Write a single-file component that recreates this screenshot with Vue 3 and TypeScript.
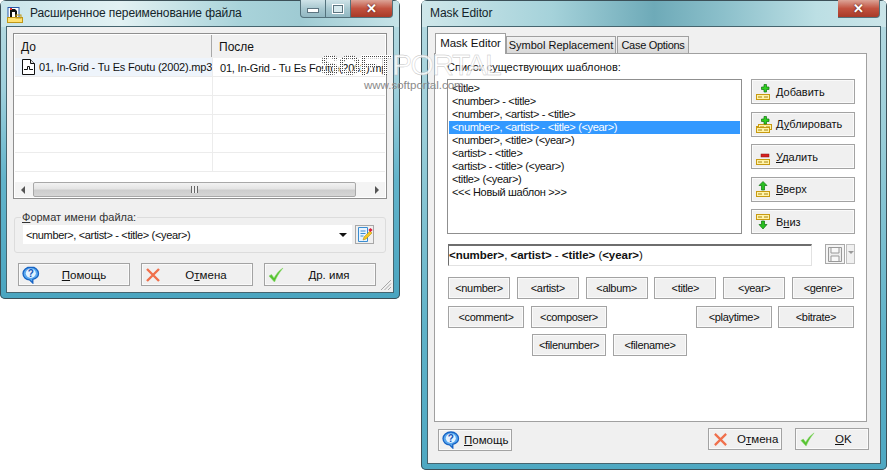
<script setup lang="ts">
const rows = [0, 1, 2, 3, 4, 5]
const templates = [
  '<title>',
  '<number> - <title>',
  '<number>, <artist> - <title>',
  '<number>, <artist> - <title> (<year>)',
  '<number>, <title> (<year>)',
  '<artist> - <title>',
  '<artist> - <title> (<year>)',
  '<title> (<year>)',
  '<<< Новый шаблон >>>',
]
const side = [
  { key: 'add', pre: '', u: 'Д', post: 'обавить' },
  { key: 'dup', pre: 'Д', u: 'у', post: 'блировать' },
  { key: 'del', pre: '', u: 'У', post: 'далить' },
  { key: 'up', pre: '', u: 'В', post: 'верх' },
  { key: 'down', pre: 'В', u: 'н', post: 'из' },
]
const row1 = ['<number>', '<artist>', '<album>', '<title>', '<year>', '<genre>']
</script>

<template>
  <div class="desk">
    <svg class="defs" width="0" height="0">
      <defs>
        <symbol id="i-help" viewBox="0 0 18 18">
          <path d="M9 1C4.500 1 1 4 1 7.600c0 3.400 3 6 6.500 6.200l3.300 3.200v-3.600c3.200-.8 5.700-3 5.700-5.800C16.500 4 13.300 1 9 1z" fill="#5aa8ee" stroke="#1763c4" stroke-width="1.300"/>
          <ellipse cx="8.800" cy="7.300" rx="5" ry="4.600" fill="#e4f2ff"/>
          <text x="8.800" y="11" text-anchor="middle" font-size="10" font-weight="700" font-family="Liberation Sans" fill="#1557b8">?</text>
        </symbol>
        <symbol id="i-x" viewBox="0 0 16 16">
          <path d="M2 2l12 12M14 2L2 14" stroke="#f0704c" stroke-width="2.400" fill="none"/>
        </symbol>
        <symbol id="i-ok" viewBox="0 0 16 16">
          <path d="M1 9l2.500-1.500L6 11c2-3.500 4.500-7 9-10C11 6 8.500 10 6.500 15z" fill="#55c230" stroke="#88d868" stroke-width=".6"/>
        </symbol>
        <symbol id="i-bar" viewBox="0 0 14 6">
          <rect x=".5" y=".5" width="13" height="5" fill="#fff3a8" stroke="#c89a10"/>
          <path d="M2 3h4M8 3h4" stroke="#a88410"/>
        </symbol>
      </defs>
    </svg>

    <!-- left window -->
    <section class="win win-left">
      <div class="glass glass-left"></div>
      <header class="titlebar">
        <svg class="app" width="16" height="16" viewBox="0 0 16 16">
          <rect x="1" y="0.500" width="11" height="11" fill="#fff" stroke="#2858a8"/>
          <path d="M3 2h5l2 2v7H8V5H5v6H3z" fill="#111"/>
          <rect x="3" y="1" width="2" height="2" fill="#e03030"/>
          <rect x="0.500" y="10.500" width="15" height="5" fill="#ffe070" stroke="#c09818"/>
          <rect x="9" y="8" width="5" height="3" fill="none" stroke="#c09818"/>
        </svg>
        <span class="title-text">Расширенное переименование файла</span>
        <div class="caption">
          <span class="cap cap-min"><i></i></span>
          <span class="cap cap-max"><b></b></span>
          <span class="cap cap-close">✕</span>
        </div>
      </header>
      <div class="client client-left">
        <div class="grid">
          <div class="grid-head">
            <span class="col col-a">До</span>
            <span class="col col-b">После</span>
          </div>
          <div class="grid-body">
            <div v-for="r in rows" :key="r" class="grid-row">
              <div class="cell cell-a" :class="{ tint: r === 0 }">
                <template v-if="r === 0">
                  <svg width="15" height="16" viewBox="0 0 15 16">
                    <path d="M1.500.5h8l4 4v11h-12z" fill="#fff" stroke="#111"/>
                    <path d="M9.500.5v4h4" fill="#ddd" stroke="#111"/>
                    <path d="M3 10.500h3.500V7.500h2v3H12" fill="none" stroke="#111"/>
                  </svg>
                  <span>01, In-Grid - Tu Es Foutu (2002).mp3</span>
                </template>
              </div>
              <div class="cell cell-b"><span v-if="r === 0">01, In-Grid - Tu Es Foutu (2002).mp3</span></div>
            </div>
          </div>
          <div class="hscroll">
            <span class="arrow arrow-l"></span>
            <div class="thumb"><span class="grip"></span></div>
            <span class="arrow arrow-r"></span>
          </div>
        </div>

        <fieldset class="group">
          <legend><u>Ф</u>ормат имени файла:</legend>
          <div class="combo-row">
            <div class="combo">
              <span>&lt;number&gt;, &lt;artist&gt; - &lt;title&gt; (&lt;year&gt;)</span>
              <i class="combo-arrow"></i>
            </div>
            <button class="edit-btn">
              <svg width="17" height="17" viewBox="0 0 17 17">
                <path d="M2.500 1.500h9v14h-9z" fill="#e8f4ff" stroke="#3a8cd0"/>
                <path d="M4.500 5h5M4.500 7.500h5M4.500 10h3" stroke="#3a8cd0"/>
                <path d="M7 14l1-3 6-6 2 2-6 6z" fill="#f6c820" stroke="#a88410" stroke-width=".5"/>
                <rect x="13" y="2.500" width="3" height="3" fill="#d8203c" transform="rotate(45 14.500 4)"/>
              </svg>
            </button>
          </div>
        </fieldset>

        <div class="actions">
          <button class="btn wide"><svg class="ic" width="18" height="18"><use href="#i-help"/></svg><span class="lbl"><u>П</u>омощь</span></button>
          <button class="btn wide"><svg class="ic" width="16" height="16"><use href="#i-x"/></svg><span class="lbl">О<u>т</u>мена</span></button>
          <button class="btn wide"><svg class="ic" width="16" height="16"><use href="#i-ok"/></svg><span class="lbl"><u>Д</u>р. имя</span></button>
        </div>
        <svg class="resize" width="12" height="12" viewBox="0 0 12 12">
          <path d="M11 1L1 11M11 4.500L4.500 11M11 8L8 11" stroke="#a8a8a8" fill="none"/>
        </svg>
      </div>
    </section>

    <!-- right window -->
    <section class="win win-right">
      <div class="glass glass-right"></div>
      <header class="titlebar">
        <span class="title-text title-plain">Mask Editor</span>
        <div class="caption">
          <span class="cap cap-close">✕</span>
        </div>
      </header>
      <div class="client client-right">
        <nav class="tabs">
          <span class="tab tab-on">Mask Editor</span>
          <span class="tab tab-sym">Symbol Replacement</span>
          <span class="tab tab-case">Case Options</span>
        </nav>
        <div class="panel">
          <div class="panel-label">Список существующих шаблонов:</div>
          <div class="list-row">
            <ul class="tpl-list">
              <li v-for="(t, i) in templates" :key="i" :class="{ sel: i === 3 }">{{ t }}</li>
            </ul>
            <div class="side">
              <button v-for="s in side" :key="s.key" class="btn side-btn">
                <svg width="16" height="18" viewBox="0 0 16 18" class="side-ic">
                  <template v-if="s.key === 'down'">
                    <use href="#i-bar" x="0" y="1" width="14" height="6"/>
                    <path d="M5.500 8h3v3.500H11l-4 4.500-4-4.500h2.500z" fill="#28c020" stroke="#107010" stroke-width=".7"/>
                  </template>
                  <template v-else>
                    <use href="#i-bar" x="0" y="11" width="14" height="6"/>
                    <use v-if="s.key === 'dup'" href="#i-bar" x="2" y="9" width="14" height="6"/>
                    <use v-if="s.key === 'dup'" href="#i-bar" x="0" y="12" width="14" height="6"/>
                    <path v-if="s.key === 'add' || s.key === 'dup'" d="M8 1.500h2.500v2.500H13v2.500h-2.500V9H8V6.500H5.500V4H8z" fill="#30d020" stroke="#107010" stroke-width=".7"/>
                    <rect v-if="s.key === 'del'" x="5" y="6" width="8" height="3" fill="#d82020" stroke="#801010" stroke-width=".5"/>
                    <path v-if="s.key === 'up'" d="M7 1.500l4 4H8.500V10h-3V5.500H3z" fill="#28c020" stroke="#107010" stroke-width=".7"/>
                  </template>
                </svg>
                <span>{{ s.pre }}<u>{{ s.u }}</u>{{ s.post }}</span>
              </button>
            </div>
          </div>
          <div class="mask-row">
            <div class="mask-input"><b>&lt;number&gt;</b>, <b>&lt;artist&gt;</b> - <b>&lt;title&gt;</b> (<b>&lt;year&gt;</b>)</div>
            <button class="save-btn">
              <svg width="14" height="15" viewBox="0 0 14 15">
                <path d="M.5.5h13v14H.5z" fill="#eee" stroke="#999"/>
                <path d="M3 1v5h8V1M3 14V9h8v5" fill="#f8f8f8" stroke="#999"/>
              </svg>
            </button>
            <button class="save-drop"><i></i></button>
          </div>
          <div class="tags">
            <div class="tag-row spread">
              <button v-for="t in row1" :key="t" class="btn tag">{{ t }}</button>
            </div>
            <div class="tag-row row2">
              <button class="btn tag tag-wide">&lt;comment&gt;</button>
              <button class="btn tag tag-wide">&lt;composer&gt;</button>
              <button class="btn tag tag-wide push">&lt;playtime&gt;</button>
              <button class="btn tag tag-wide">&lt;bitrate&gt;</button>
            </div>
            <div class="tag-row row3">
              <button class="btn tag tag-mid">&lt;filenumber&gt;</button>
              <button class="btn tag tag-mid">&lt;filename&gt;</button>
            </div>
          </div>
        </div>
        <footer class="foot">
          <button class="btn foot-btn foot-help"><svg width="18" height="18"><use href="#i-help"/></svg><span><u>П</u>омощь</span></button>
          <button class="btn foot-btn foot-cancel"><svg width="15" height="15"><use href="#i-x"/></svg><span>О<u>т</u>мена</span></button>
          <button class="btn foot-btn foot-ok"><svg width="15" height="15"><use href="#i-ok"/></svg><span><u>O</u>K</span></button>
        </footer>
      </div>
    </section>

    <!-- watermark over both windows -->
    <div class="wm wm-soft">SOFT</div>
    <div class="wm wm-portal">PORTAL</div>
    <div class="wm wm-url">www.softportal.com</div>
  </div>
</template>

<style>
html, body { margin: 0; background: #fff; }
</style>

<style scoped>
.desk {
  position: relative;
  width: 887px;
  height: 470px;
  overflow: hidden;
  background: #fff;
  font: 11px "Liberation Sans", Arial, sans-serif;
  color: #111;
}
.defs { position: absolute; }
.win {
  position: absolute;
  top: 0;
  box-sizing: border-box;
  padding: 0 7px 7px;
  border-radius: 6px 6px 5px 5px;
  box-shadow: inset 0 0 0 1px #3c5058;
  display: flex;
  flex-direction: column;
  overflow: hidden;
}
.win-left { left: 0; width: 400px; height: 299px; background: linear-gradient(180deg, #bcdde3 0, #9fd0dc 30%, #62b4cb 60%, #4aa5c0 100%); }
.win-right { left: 421px; width: 466px; height: 470px; background: linear-gradient(180deg, #b8dbe2 0, #98cdd8 30%, #5fb2c8 70%, #4ea8c2 100%); }
.glass { position: absolute; left: 1px; right: 1px; top: 1px; height: 26px; }
.glass-left { background: linear-gradient(90deg, #c9e5ea 0, #e2f1f3 30%, #a9d3da 60%, #9fcbd3 75%, #c6e3e8 100%); }
.glass-right { background: linear-gradient(90deg, #cfe7ea 0, #a5d2da 28%, #6eaab8 50%, #8cc0cb 65%, #bcdfe4 85%, #cbe5e9 100%); }
.titlebar {
  position: relative;
  height: 27px;
  flex: none;
  display: flex;
  align-items: flex-start;
}
.app { margin: 7px 7px 0 0; flex: none; }
.title-text { font-size: 12px; line-height: 15px; margin-top: 6px; letter-spacing: -.09px; color: #14242a; }
.title-plain { margin-left: 2px; }
.caption { margin-left: auto; display: flex; height: 18px; }
.cap {
  display: flex;
  align-items: center;
  justify-content: center;
  height: 18px;
  box-sizing: border-box;
  border: 1px solid #54727c;
  border-top: 0;
}
.cap-min { width: 26px; border-radius: 0 0 0 4px; background: linear-gradient(180deg, #cfe3e8, #a8c8d0 50%, #92b8c2); }
.cap-min i { width: 10px; height: 3px; background: #fff; border: 1px solid #5c7480; margin-top: 4px; }
.cap-max { width: 25px; border-left: 0; background: linear-gradient(180deg, #cfe3e8, #a8c8d0 50%, #92b8c2); }
.cap-max b { width: 8px; height: 6px; border: 1px solid #5c7480; background: #d8eaee; box-shadow: 0 0 0 1px #fff; }
.cap-close { width: 42px; border-left: 0; border-radius: 0 0 4px 0; color: #fff; font-size: 13px; font-weight: 700; background: linear-gradient(180deg, #dca497, #c2523f 50%, #a83a28); text-shadow: 0 0 2px #401008; }
.client {
  position: relative;
  flex: 1;
  min-height: 0;
  box-sizing: border-box;
  background: #f0f0f0;
  box-shadow: 0 0 0 1px #46656f;
}
.client-left { padding: 6px; display: flex; flex-direction: column; }

.grid {
  width: 374px;
  height: 166px;
  box-sizing: border-box;
  border: 1px solid #8f8f8f;
  background: #fff;
  padding: 1px;
  display: flex;
  flex-direction: column;
  flex: none;
}
.grid-head {
  height: 23px;
  box-sizing: border-box;
  display: flex;
  background: #f1f1f1;
  flex: none;
}
.col { font-size: 12px; line-height: 24px; box-sizing: border-box; padding-left: 6px; height: 22px; }
.col-a { width: 197px; border-right: 1px solid #a8a8a8; }
.col-b { flex: 1; padding-left: 7px; }
.grid-body { flex: 1; overflow: hidden; }
.grid-row { display: flex; height: 19px; border-bottom: 1px solid #ececec; box-sizing: border-box; }
.cell { line-height: 20px; white-space: nowrap; overflow: hidden; font-size: 11px; letter-spacing: -.2px; box-sizing: border-box; }
.cell-a { width: 198px; border-right: 1px solid #ececec; padding-left: 6px; display: flex; align-items: center; gap: 3px; }
.cell-a svg { flex: none; }
.cell-b { flex: 1; padding-left: 7px; }
.tint { background: #eef4fb; }
.hscroll {
  height: 15px;
  flex: none;
  background: #f4f4f4;
  display: flex;
  align-items: center;
}
.arrow { width: 0; height: 0; border-top: 4px solid transparent; border-bottom: 4px solid transparent; }
.arrow-l { border-right: 4px solid #555; margin: 0 8px 0 6px; }
.arrow-r { border-left: 4px solid #555; margin: 0 5px 0 19px; }
.thumb {
  width: 323px;
  height: 15px;
  box-sizing: border-box;
  border: 1px solid #a8a8a8;
  border-radius: 2px;
  background: linear-gradient(180deg, #f2f2f2, #e4e4e4 45%, #cdcdcd 55%, #d6d6d6);
  display: flex;
  align-items: center;
  justify-content: center;
}
.grip { width: 7px; height: 7px; background: repeating-linear-gradient(90deg, #666 0 1px, #eee 1px 3px); }

.group {
  width: 372px;
  height: 41px;
  box-sizing: border-box;
  margin: 13px 0 0 1px;
  padding: 0 8px;
  border: 1px solid #dcdcdc;
  border-radius: 3px;
  min-width: 0;
}
.group legend { padding: 0 1px; margin-left: -2px; font-size: 11px; line-height: 11px; color: #333; }
.combo-row { display: flex; gap: 3px; margin-top: 2px; }
.combo {
  width: 329px;
  height: 19px;
  background: #fff;
  box-sizing: border-box;
  padding: 0 4px 0 3px;
  display: flex;
  align-items: center;
  justify-content: space-between;
  font-size: 11px;
  letter-spacing: -.35px;
}
.combo-arrow { width: 0; height: 0; border-left: 4px solid transparent; border-right: 4px solid transparent; border-top: 4px solid #111; margin-right: 1px; }
.edit-btn {
  width: 19px;
  height: 19px;
  padding: 0;
  border: 1px solid #a8a8a8;
  background: #f0f0f0;
  display: flex;
  align-items: center;
  justify-content: center;
}
.btn {
  box-sizing: border-box;
  border: 1px solid #a3a3a3;
  background: #f0f0f0;
  font: 11.500px "Liberation Sans", Arial, sans-serif;
  color: #111;
  padding: 0;
  display: flex;
  align-items: center;
  box-shadow: inset 0 0 0 1px #fafafa;
}
.actions { display: flex; gap: 11px; margin: 10px 0 0 5px; }
.wide { width: 112px; height: 23px; padding-left: 3px; }
.ic { flex: none; }
.lbl { flex: 1; text-align: center; padding-right: 1px; }
.resize { position: absolute; right: 1px; bottom: 1px; }

.client-right { padding: 6px 0 0 6px; display: flex; flex-direction: column; }
.tabs { display: flex; align-items: flex-end; height: 20px; padding-left: 1px; flex: none; }
.tab {
  box-sizing: border-box;
  border: 1px solid #a0a0a0;
  border-bottom: 0;
  background: linear-gradient(180deg, #f2f2f2, #d8d8d8);
  height: 17px;
  font-size: 11px;
  line-height: 16px;
  text-align: center;
  white-space: nowrap;
}
.tab-on { width: 71px; height: 21px; background: #fff; position: relative; z-index: 1; margin-bottom: -1px; line-height: 19px; font-size: 11.500px; }
.tab-sym { width: 110px; }
.tab-case { width: 72px; margin-left: 1px; letter-spacing: -.3px; }
.panel {
  width: 433px;
  height: 369px;
  box-sizing: border-box;
  border: 1px solid #a0a0a0;
  background: #fff;
  padding: 6px 0 0 12px;
  flex: none;
}
.panel-label { height: 19px; line-height: 14px; font-size: 11px; }
.list-row { display: flex; gap: 9px; height: 155px; }
.tpl-list {
  list-style: none;
  margin: 0;
  width: 295px;
  height: 155px;
  box-sizing: border-box;
  border: 1px solid #8f8f8f;
  padding: 2px 1px;
  flex: none;
}
.tpl-list li { height: 13px; line-height: 13px; padding-left: 3px; font-size: 11px; letter-spacing: -.33px; white-space: pre; }
.tpl-list li.sel { background: #3399ff; color: #fff; }
.side { display: flex; flex-direction: column; justify-content: space-between; width: 104px; }
.side-btn { height: 25px; padding-left: 4px; gap: 4px; font-size: 11px; }
.side-ic { flex: none; }
.mask-row { display: flex; margin-top: 10px; height: 22px; align-items: flex-start; }
.mask-input {
  width: 364px;
  height: 22px;
  box-sizing: border-box;
  margin-left: 1px;
  border: 1px solid #e2e2e2;
  border-top: 2px solid #6e6e6e;
  border-left: 1px solid #6e6e6e;
  line-height: 18px;
  font-size: 11.500px;
  letter-spacing: -.05px;
  white-space: pre;
}
.save-btn {
  width: 20px;
  height: 20px;
  margin-left: 13px;
  padding: 0;
  border: 1px solid #a8a8a8;
  background: #f4f4f4;
  display: flex;
  align-items: center;
  justify-content: center;
}
.save-drop {
  width: 9px;
  height: 20px;
  margin-left: 1px;
  padding: 0;
  border: 1px solid #c0c0c0;
  background: #f0f0f0;
  display: flex;
  justify-content: center;
  padding-top: 6px;
}
.save-drop i { width: 0; height: 0; border-left: 3px solid transparent; border-right: 3px solid transparent; border-top: 3px solid #999; }
.tags { margin: 11px 0 0 1px; width: 406px; }
.tag-row { display: flex; }
.spread { justify-content: space-between; }
.row2 { margin-top: 7px; gap: 7px; }
.row3 { margin-top: 6px; margin-left: 84px; gap: 7px; }
.tag { height: 22px; width: 62px; justify-content: center; font-size: 11px; letter-spacing: -.33px; }
.tag-wide { width: 76px; }
.tag-mid { width: 74px; }
.push { margin-left: 82px; }
.row2 .tag:last-child { margin-left: -1px; }
.foot { display: flex; height: 24px; align-items: flex-start; margin: 6px 0 0 4px; }
.foot-btn { width: 74px; height: 22px; }
.foot-help { margin-top: 1px; padding-left: 3px; gap: 4px; }
.foot-cancel { margin-left: auto; padding-left: 4px; gap: 9px; }
.foot-ok { margin-left: 13px; margin-right: 11px; padding-left: 4px; gap: 20px; }

.wm { position: absolute; white-space: nowrap; pointer-events: none; }
.wm-soft {
  left: 320px;
  top: 50px;
  font: 700 30px/30px "Liberation Sans", Arial, sans-serif;
  letter-spacing: -2px;
  color: transparent;
  background:
    repeating-linear-gradient(0deg, #fff 0 1px, transparent 1px 2px),
    repeating-linear-gradient(90deg, #444 0 1px, #fff 1px 2px);
  -webkit-background-clip: text;
  background-clip: text;
}
.wm-portal {
  left: 392px;
  top: 50px;
  font: 400 30px/30px "Liberation Sans", Arial, sans-serif;
  letter-spacing: -1.500px;
  color: rgba(255, 255, 255, .8);
  -webkit-text-stroke: .4px #c0c0c0;
}
.wm-url {
  left: 364px;
  top: 78px;
  font: 11.500px/14px "Liberation Sans", Arial, sans-serif;
  color: #8a8a8a;
}
</style>
